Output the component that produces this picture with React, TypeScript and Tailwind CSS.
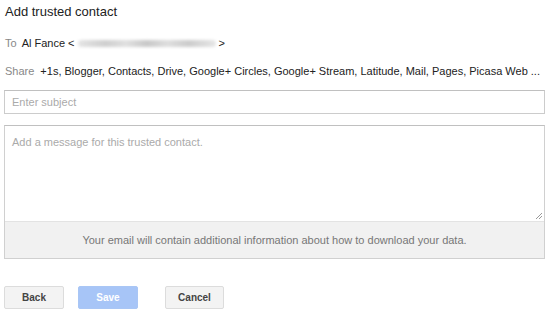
export default function App() {
  return (
    <div className="h-[313px] w-[550px] overflow-hidden bg-white font-['Liberation_Sans',Arial,sans-serif] text-[11px] text-[#222]">
      <div className="px-[4px] pt-[4px]">
        <h1 className="pl-[1px] text-[13px] leading-[16px] text-[#222]">Add trusted contact</h1>

        <div className="mt-[16px] flex items-center pl-[1px] leading-[14px]">
          <span className="text-[#888]">To</span>
          <span className="ml-[5px]">Al Fance &lt;</span>
          {/* redacted address */}
          <div className="mx-[3px] h-[7px] w-[138px] rounded-full bg-[linear-gradient(90deg,#e4e4e4,#cfcfcf_20%,#e0e0e0_35%,#c8c8c8_50%,#dedede_65%,#cccccc_80%,#e6e6e6)] blur-[1.5px]" />
          <span>&gt;</span>
        </div>

        <div className="mt-[14px] flex whitespace-nowrap pl-[1px] leading-[14px]">
          <span className="text-[#888]">Share</span>
          <span className="ml-[6px]">
            +1s, Blogger, Contacts, Drive, Google+ Circles, Google+ Stream, Latitude, Mail, Pages, Picasa Web ...
          </span>
        </div>

        <div className="mt-[12px] mr-[1px] flex h-[24px] items-center border border-[#ccc] border-t-[#c0c0c0] px-[7px] text-[11px] text-[#aaa]">
          Enter subject
        </div>

        <div className="mt-[11px] mr-[1px] border border-[#d0d0d0] border-t-[#c0c0c0]">
          <div className="relative h-[95px] bg-white px-[7px] pt-[8px] text-[11px] text-[#aaa]">
            Add a message for this trusted contact.
            <svg className="absolute bottom-[1px] right-[1px]" width="9" height="9" viewBox="0 0 9 9">
              <path d="M8 2 L2 8 M8 5 L5 8" stroke="#999" strokeWidth="1" />
            </svg>
          </div>
          <div className="flex h-[37px] items-center justify-center border-t border-[#e3e3e3] bg-[#f1f1f1] text-[11px] text-[#777]">
            Your email will contain additional information about how to download your data.
          </div>
        </div>

        <div className="mt-[27px] flex gap-[14px] text-[10px] font-bold">
          <button className="flex h-[23px] w-[60px] items-center justify-center rounded-[2px] border border-[#dcdcdc] bg-[#f3f3f3] text-[#444]">
            Back
          </button>
          <button className="flex h-[23px] w-[60px] items-center justify-center rounded-[2px] border border-[#a9c6f5] bg-[#a7c5f7] text-white">
            Save
          </button>
          <button className="ml-[13px] flex h-[23px] w-[59px] items-center justify-center rounded-[2px] border border-[#dcdcdc] bg-[#f3f3f3] text-[#444]">
            Cancel
          </button>
        </div>
      </div>
    </div>
  );
}
